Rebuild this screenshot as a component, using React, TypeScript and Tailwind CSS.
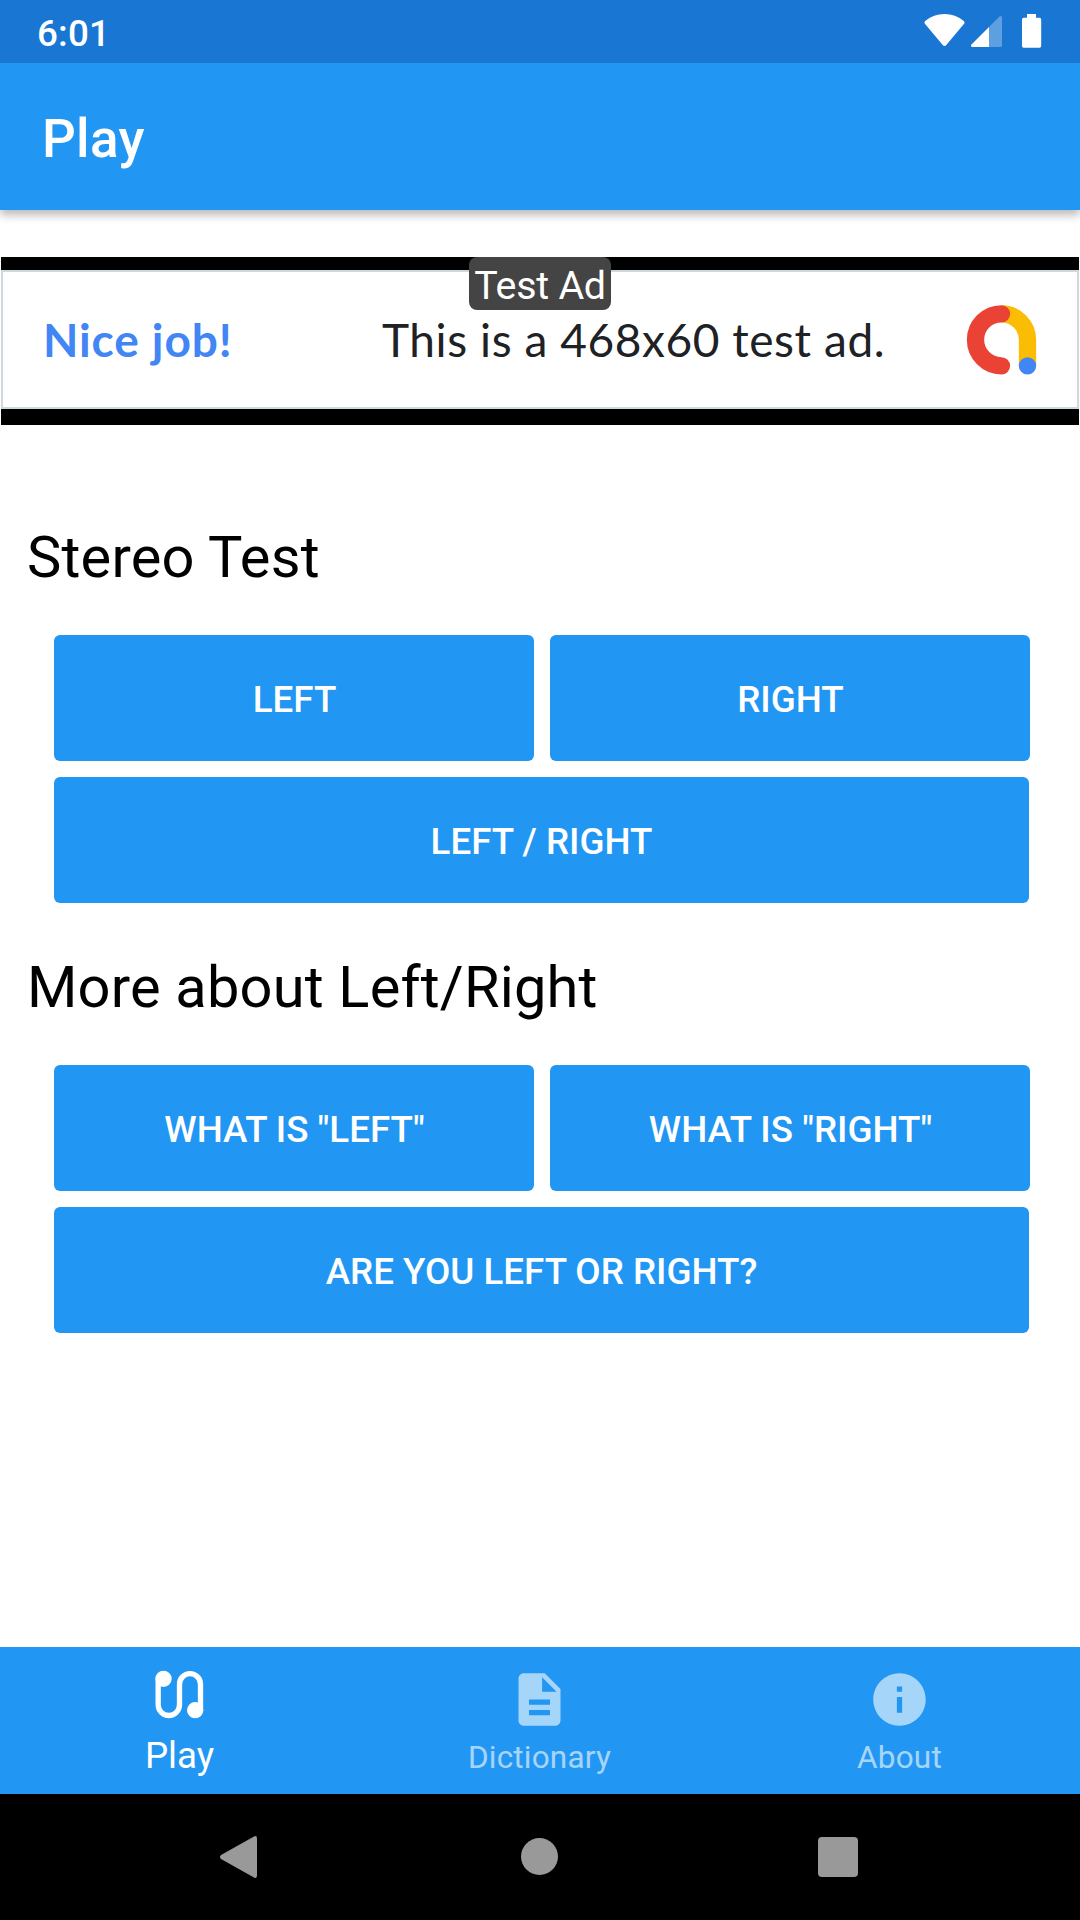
import type { ReactNode } from "react";

function StatusBar() {
  return (
    <div className="flex h-[63px] items-center justify-between bg-[#1976d2] pl-[37px]">
      <span className="pt-[4px] text-[36.75px] leading-[44px] font-medium tracking-[0.2px]">6:01</span>
      <svg className="h-[63px] w-[200px]" viewBox="0 0 200 63" fill="#fff">
        <path d="M64.5 46 Q63.5 46 62.700 45.100 L44.700 23.500 Q43.800 22 45.200 21 Q53.500 14 64.500 14 Q75.500 14 83.800 21 Q85.200 22 84.300 23.500 L66.300 45.100 Q65.500 46 64.500 46Z" />
        <path d="M109 27 L91.500 44.500 Q90.200 47 92.500 47 H109Z" />
        <path d="M109 27 L119.500 16.500 Q122 15 122 18 V45.500 Q122 47 120.500 47 H109Z" fillOpacity=".3" />
        <path d="M147 14 H156 V17.700 H159.500 Q161.200 17.700 161.200 19.500 V46 Q161.200 47.800 159.500 47.800 H143.700 Q142 47.800 142 46 V19.500 Q142 17.700 143.700 17.700 H147Z" />
      </svg>
    </div>
  );
}

function AdBanner() {
  return (
    <div className="relative mx-px mt-[47px] h-[168px] bg-black pt-[13px]">
      <div className="flex h-[139px] items-center border-2 border-[#cfd8dc] bg-white pl-[40px] font-['Lato',sans-serif]">
        <span className="w-[339px] text-[46px] leading-[56px] font-bold tracking-[0.9px] whitespace-nowrap text-[#4285f4]">
          Nice job!
        </span>
        <span className="w-[584px] text-[46px] leading-[56px] tracking-[0.57px] whitespace-nowrap text-[#202124]">
          This is a 468x60 test ad.
        </span>
        <svg className="h-[72px] w-[72px] shrink-0" viewBox="966 304 72 72" fill="none" strokeWidth="17.300">
          <path d="M1001.700 313.800 A26 26 0 0 1 1027.500 339.800 V366" stroke="#fbbc04" />
          <path d="M1001.500 313.800 A26 26 0 0 0 1001.500 365.800" stroke="#ea4335" strokeLinecap="round" />
          <circle cx="1027.500" cy="365.900" r="8.700" fill="#4285f4" />
        </svg>
      </div>
      <div className="absolute top-0 left-[468px] flex h-[53px] w-[142px] items-center justify-center rounded-lg bg-[#444] pt-[5px] text-[39.4px] leading-[48px] tracking-[-0.25px] whitespace-nowrap text-white">
        Test Ad
      </div>
    </div>
  );
}

function Btn({ children, full = false }: { children: ReactNode; full?: boolean }) {
  return (
    <button
      className={
        "flex h-[126px] items-center justify-center rounded-[6px] bg-[#2196f3] pt-[3px] text-[36.75px] leading-[44px] font-medium text-white " +
        (full ? "col-span-2 w-[975px]" : "w-[480px] pl-[1px]")
      }
    >
      {children}
    </button>
  );
}

function Section({ title, children }: { title: string; children: ReactNode }) {
  return (
    <section>
      <h2 className="pl-[27px] text-[57.75px] leading-[68px] tracking-[0.2px] text-black">{title}</h2>
      <div className="mt-[44px] ml-[54px] grid w-[976px] grid-cols-2 gap-4">{children}</div>
    </section>
  );
}

function BottomTabs() {
  return (
    <nav className="grid h-[147px] grid-cols-3 bg-[#2196f3] text-white">
      <div className="flex flex-col items-center pt-[16px] pr-px">
        <svg className="h-[63px] w-[63px]" viewBox="145.500 99.500 189 189" fill="none">
          <path
            d="M176 147 V225 A32 32 0 0 0 240 225 V163 A31.500 31.500 0 0 1 303 163 V241"
            stroke="#fff"
            strokeWidth="16"
          />
          <circle cx="192" cy="147" r="24.500" fill="#fff" />
          <circle cx="287" cy="241" r="24.500" fill="#fff" />
        </svg>
        <span className="mt-[8px] text-[36.75px] leading-[44px]">Play</span>
      </div>
      <div className="flex flex-col items-center pt-[21px] pr-px opacity-60">
        <svg className="h-[63px] w-[63px]" viewBox="0 0 24 24" fill="currentColor">
          <path d="M14 2H6c-1.100 0-1.990.9-1.990 2L4 20c0 1.100.89 2 1.990 2H18c1.100 0 2-.9 2-2V8l-6-6zm2 16H8v-2h8v2zm0-4H8v-2h8v2zm-3-5V3.500L18.500 9H13z" />
        </svg>
        <span className="mt-[8px] text-[31.5px] leading-[38px] tracking-[0.2px]">Dictionary</span>
      </div>
      <div className="flex flex-col items-center pt-[21px] pr-px opacity-60">
        <svg className="h-[63px] w-[63px]" viewBox="0 0 24 24" fill="currentColor">
          <path d="M12 2C6.480 2 2 6.480 2 12s4.480 10 10 10 10-4.480 10-10S17.520 2 12 2zm1 15h-2v-6h2v6zm0-8h-2V7h2v2z" />
        </svg>
        <span className="mt-[8px] text-[31.5px] leading-[38px] tracking-[0.2px]">About</span>
      </div>
    </nav>
  );
}

function SystemNav() {
  return (
    <div className="flex h-[126px] items-center justify-between bg-black pr-[222px] pb-px pl-[219px]">
      <svg className="h-[42px] w-[39px]" viewBox="0 0 39 42" fill="#999">
        <path d="M35 .6 Q38 -1 38 2.500 V39.500 Q38 43 35 41.400 L2 23 Q0 21 2 19Z" />
      </svg>
      <div className="ml-[2px] h-[37px] w-[37px] rounded-full bg-[#999]" />
      <div className="h-[40px] w-[40px] rounded-[4px] bg-[#999]" />
    </div>
  );
}

export default function App() {
  return (
    <div className="flex h-[1920px] w-[1080px] flex-col bg-white font-['Roboto',sans-serif]">
      <header className="text-white">
        <StatusBar />
        <div className="flex h-[147px] items-center bg-[#2196f3] pt-[4px] pl-[42px] shadow-[0_5px_9px_rgba(0,0,0,0.28)] [clip-path:inset(0_0_-20px_0)]">
          <h1 className="text-[53px] leading-[62px] font-medium tracking-[0.3px]">Play</h1>
        </div>
      </header>
      <AdBanner />
      <main className="flex flex-1 flex-col gap-[50px] pt-[98px]">
        <Section title="Stereo Test">
          <Btn>LEFT</Btn>
          <Btn>RIGHT</Btn>
          <Btn full>LEFT / RIGHT</Btn>
        </Section>
        <Section title="More about Left/Right">
          <Btn>WHAT IS "LEFT"</Btn>
          <Btn>WHAT IS "RIGHT"</Btn>
          <Btn full>ARE YOU LEFT OR RIGHT?</Btn>
        </Section>
      </main>
      <BottomTabs />
      <SystemNav />
    </div>
  );
}
